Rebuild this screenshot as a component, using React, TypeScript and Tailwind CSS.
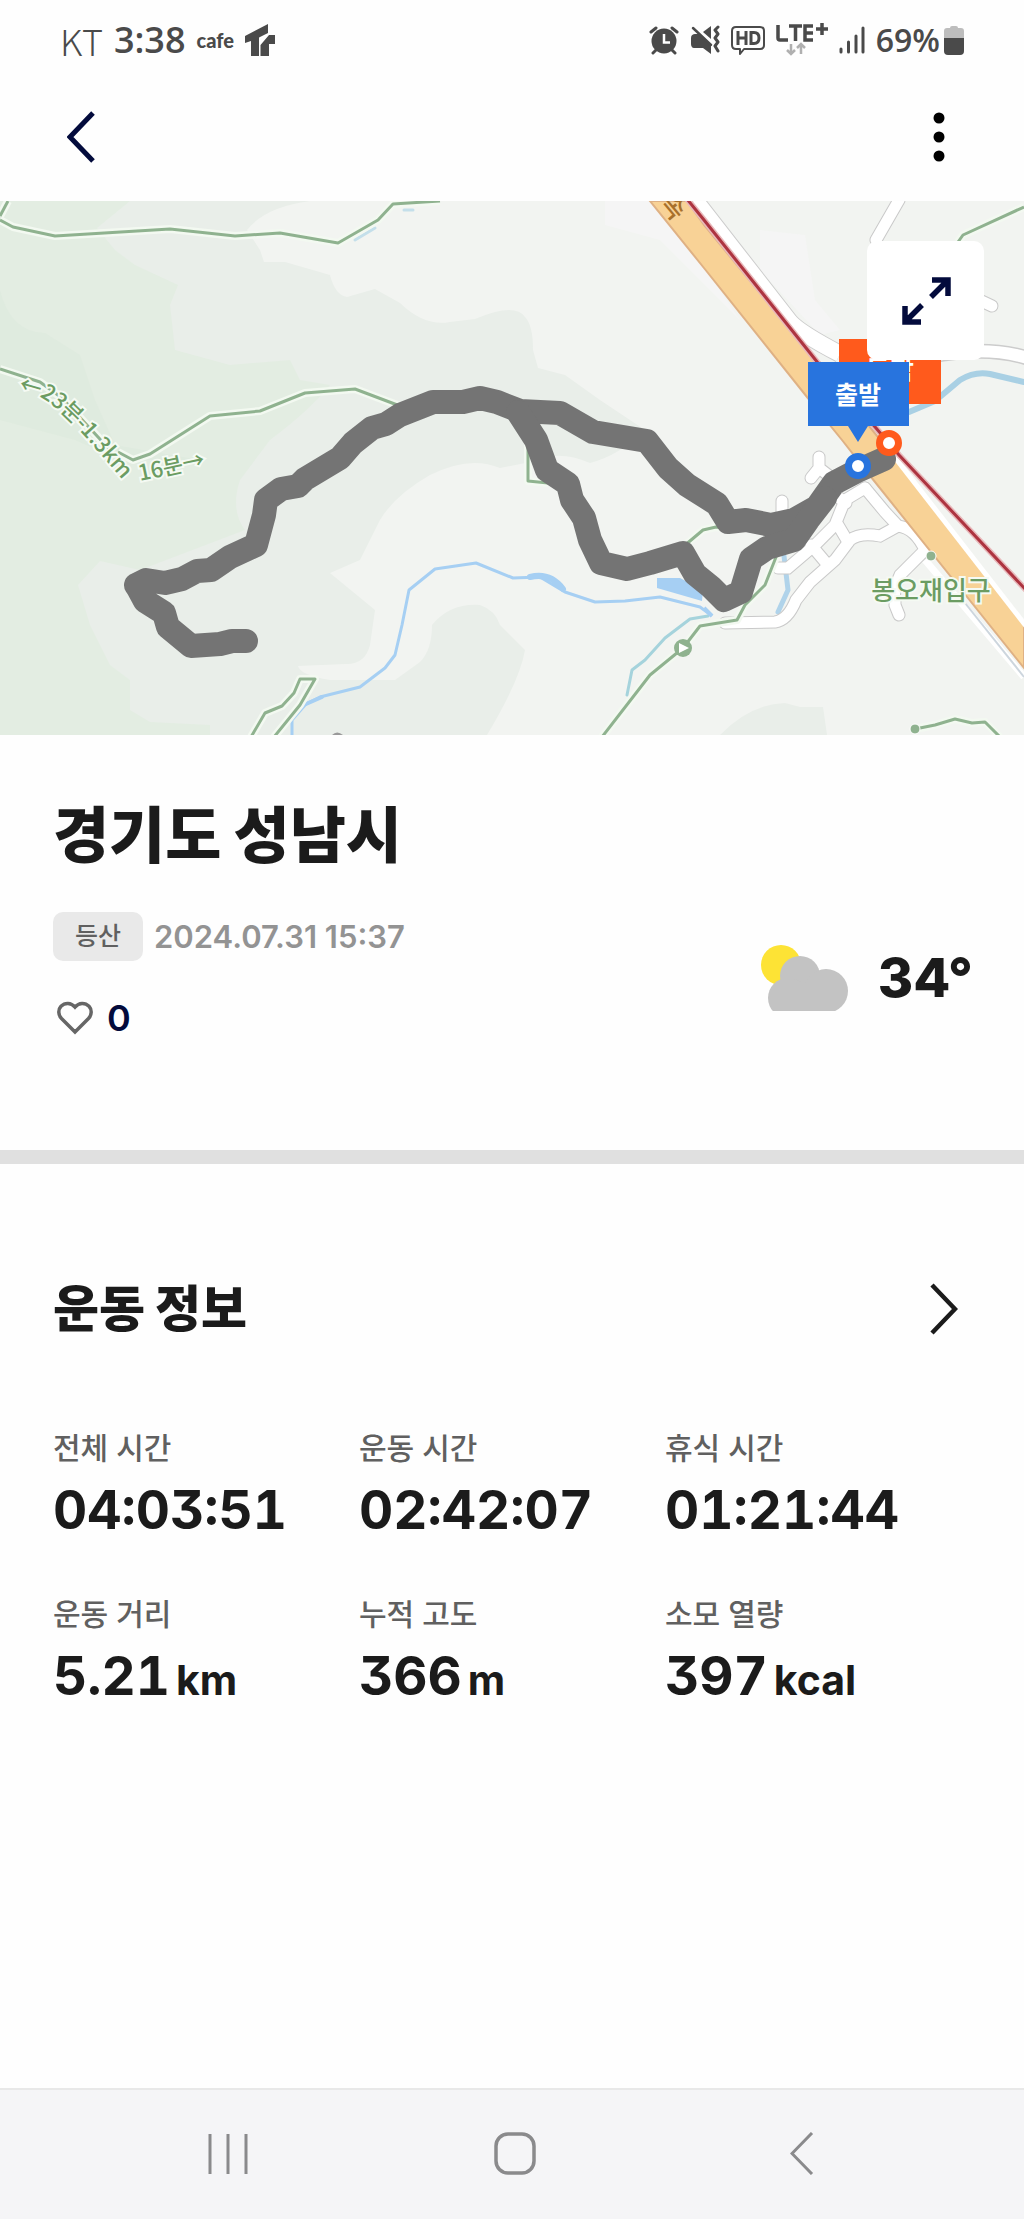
import React from "react";

const KR = "font-['Inter','Noto_Sans_CJK_KR',sans-serif]";

const ink = "#4a4a4a";

function StatusBar() {
  return (
    <div className="flex h-[72px] items-center justify-between pl-[60px] pr-[60px] pt-[8px] text-[#4a4a4a]">
      <div className="flex items-center gap-[11px]">
        <span className="font-['Noto_Sans_CJK_KR',sans-serif] text-[36px] font-light leading-[40px]">KT</span>
        <span className="font-['Open_Sans',sans-serif] text-[36px] font-semibold leading-[40px]">3:38</span>
        <span className="font-['Lato',sans-serif] text-[20px] font-black leading-[40px]">cafe</span>
        <svg width="30" height="33" viewBox="0 0 30 33" fill={ink} aria-hidden="true">
          <path d="M0 12 23 0v9l-9 4.500v18.500H6V17L0 19Z" />
          <path d="M15.500 21 24 11h6v9h-6v12h-8.500Z" />
        </svg>
      </div>
      <div className="flex items-center gap-[11px]">
        <svg width="30" height="30" viewBox="0 0 30 30" aria-label="알람" role="img">
          <circle cx="15" cy="16" r="12.500" fill={ink} />
          <path d="M2 7l5-4M28 7l-5-4M7 25l-3 3M23 25l3 3" stroke={ink} strokeWidth="3" strokeLinecap="round" />
          <path d="M15 9v8.500h6" stroke="white" strokeWidth="2.500" fill="none" />
        </svg>
        <svg width="30" height="30" viewBox="0 0 30 30" aria-label="진동" role="img">
          <path d="M1 13c0-3 2-4 4-4h4l12 11v9l-8-6H4c-2 0-3-2-3-4Z" fill={ink} />
          <path d="M21 1v13l-8-7Z" fill={ink} />
          <path d="M3 3l18 17" stroke={ink} strokeWidth="2.500" strokeLinecap="round" />
          <path d="M28 2l-3 3 3 4-3 4 3 4-3 4 3 5" stroke={ink} strokeWidth="3" fill="none" strokeLinecap="round" strokeLinejoin="round" />
        </svg>
        <svg width="34" height="30" viewBox="0 0 34 30" aria-label="HD" role="img">
          <path d="M5 2h24q4 0 4 4v14q0 4-4 4H13l-4 5v-5H5q-4 0-4-4V6q0-4 4-4Z" stroke={ink} strokeWidth="2" fill="none" strokeLinejoin="round" />
          <path d="M7 6v14M15 6v14M7 13h8M20 7.500v11h3q5 0 5-5.500t-5-5.500Z" stroke={ink} strokeWidth="3" fill="none" />
        </svg>
        <svg width="52" height="34" viewBox="0 0 52 34" aria-label="LTE+" role="img">
          <path d="M2 2v13q0 2 2 2h8M13 3h13M19.500 3v15M37 3h-8v14h8M29 10h8M46 0v12M40 6h12" stroke={ink} strokeWidth="3.500" fill="none" />
          <path d="M15 21v10M11 27l4 4 4-4M25 31V21M21 25l4-4 4 4" stroke="#b0b0b0" strokeWidth="2.500" fill="none" />
        </svg>
        <svg width="26" height="30" viewBox="0 0 26 30" aria-label="신호" role="img">
          <path d="M2 24v3M9.500 17v10M17 11v16M24 3v24" stroke={ink} strokeWidth="3" strokeLinecap="round" />
        </svg>
        <div className="flex items-center gap-1">
          <span className="font-['Open_Sans',sans-serif] text-[32px] font-semibold leading-[40px]">69%</span>
          <svg width="20" height="30" viewBox="0 0 20 30" aria-hidden="true">
            <path d="M3 3h3q0-2 2-2h4q2 0 2 2h3q3 0 3 3v8H0V6q0-3 3-3Z" fill="#bdbdbd" />
            <path d="M0 13h20v13q0 4-4 4H4q-4 0-4-4Z" fill={ink} />
          </svg>
        </div>
      </div>
    </div>
  );
}

function Header() {
  return (
    <header className="flex h-[129px] items-center justify-between pl-[56px] pr-[55px]">
      <button aria-label="뒤로" className="flex h-[72px] w-[50px] items-center justify-center">
        <svg width="28" height="52" viewBox="0 0 28 52" aria-hidden="true">
          <path d="M26 2 3 26l23 24" stroke="#030b3c" strokeWidth="5" fill="none" />
        </svg>
      </button>
      <button aria-label="더보기" className="flex h-[72px] w-[60px] items-center justify-center">
        <svg width="12" height="50" viewBox="0 0 12 50" aria-hidden="true">
          <circle cx="6" cy="6" r="5.500" />
          <circle cx="6" cy="25" r="5.500" />
          <circle cx="6" cy="44" r="5.500" />
        </svg>
      </button>
    </header>
  );
}

const trails = [
  "M0 216 8 201",
  "M0 220 13 227 55 236 170 229 235 236 280 233 338 243 378 220 393 204 440 201",
  "M0 369 40 382 62 398 110 450",
  "M118 452 133 460 150 454 210 416 260 411 305 393 355 389 400 406",
  "M528 440V481L548 483",
  "M684 546 703 530 716 527 740 529",
  "M778 552 765 585 745 605 737 620 700 626 683 648 650 675 602 737",
  "M958 242 963 235 1024 207",
  "M915 729 935 725 955 719 972 723 985 722 1000 737",
  "M251 737 265 713 282 706 294 693 300 679H315L300 705 274 737",
];

const roads = [
  "M725 623 775 622Q788 620 796 600L810 582 835 560 850 540Q860 532 880 536L898 526",
  "M865 488 885 512 898 526Q915 528 925 550L900 575Q893 590 895 600V605L899 615",
  "M865 488 845 500 835 525 815 545 788 568H778",
  "M838 525 848 542",
  "M811 545 827 564",
  "M838 497 846 503",
  "M819 457V468L811 478M819 468 828 475",
  "M782 501V512",
  "M899 200 876 240",
  "M975 298 992 306",
];

const greenLine = "#8fb28f";

function TrailMap() {
  return (
    <svg
      className="block h-[534px] w-full"
      viewBox="0 201 1024 534"
      preserveAspectRatio="xMidYMid slice"
      role="img"
      aria-label="운동 경로 지도"
    >
      <rect x="0" y="201" width="1024" height="534" fill="#f2f4f1" />
      <path
        d="M0 201H310Q265 207 247 230L260 250 264 262 285 262 330 275Q335 295 347 297L375 289 400 303Q425 327 450 322L475 319Q515 302 525 317Q533 325 533 350L538 368 565 375 600 400 645 430Q620 455 590 463 560 450 540 460L500 468Q470 455 430 475 395 495 380 520L360 560 330 573 375 610 370 645Q365 665 345 664L298 666Q300 675 330 680H395L420 662Q432 650 432 625 450 603 480 605 495 610 500 625L525 650Q520 680 487 735H0Z"
        fill="#e9eee9"
      />
      <path
        d="M0 201H130L97 228 115 250 135 265 178 285 170 305 175 350 230 365 290 360 300 380 330 385Q310 410 270 440L240 480Q230 510 245 530L140 570 100 561 78 585 90 625 110 665 130 680V710L150 722 210 725V735H0Z"
        fill="#e3ede2"
      />
      <path d="M0 290Q10 332 45 333L80 355 95 400 115 445 200 460 120 460 75 440 0 420Z" fill="#dfebdf" />
      <path d="M720 735Q750 704 785 703L800 707H823L827 735Z" fill="#e9eee9" />
      <path d="M605 201H650L700 260 740 320 660 240 605 225Z" fill="#f5f5f5" />
      <path d="M760 230 805 235 815 300 840 330 820 335 760 270Z" fill="#f5f5f5" />

      <g fill="none" stroke="#a6cff3" strokeLinejoin="round" strokeLinecap="round">
        <path
          d="M292 737V720L306 704 320 697 360 687 385 668 395 655 402 625 409 590 435 569 476 563 513 578 540 577 565 592 595 602 625 601 660 597 700 607 711 615"
          strokeWidth="3"
        />
        <path d="M530 577Q550 572 563 589" strokeWidth="6" />
        <path d="M306 704 322 697" strokeWidth="4" />
        <path d="M708 616 690 619 665 638 645 660 632 670 627 695" strokeWidth="3" stroke="#a5d3dc" />
        <path d="M909 412 935 401 960 380Q975 371 990 374L1024 382" strokeWidth="6" stroke="#a9d0e4" />
        <path d="M784 556 788 590 778 612" strokeWidth="5" stroke="#b0d3ea" />
        <path d="M355 240 375 228M404 210H413" strokeWidth="3" stroke="#c4dfea" />
      </g>
      <path d="M657 578H680L703 590 702 601 657 588Z" fill="#a6cff3" />
      <path d="M704 608 712 616" stroke="#a6cff3" strokeWidth="4" />

      <g fill="none" stroke="#c9c9c9" strokeWidth="13" strokeLinecap="round">
        {roads.map((d) => <path key={d} d={d} />)}
      </g>
      <g fill="none" stroke="#ffffff" strokeWidth="11" strokeLinecap="round">
        {roads.map((d) => <path key={d} d={d} />)}
      </g>
      <path d="M695 200 790 322Q800 333 840 354" fill="none" stroke="#cccccc" strokeWidth="18" />
      <path d="M695 200 790 322Q800 333 840 354" fill="none" stroke="#ffffff" strokeWidth="16" />
      <path d="M930 356Q990 345 1030 359" fill="none" stroke="#cccccc" strokeWidth="15" />
      <path d="M930 356Q990 345 1030 359" fill="none" stroke="#ffffff" strokeWidth="12" />
      <path d="M925 560 1024 677" stroke="#ffffff" strokeWidth="7" />
      <path d="M965 603 1024 677" stroke="#cdd6de" strokeWidth="2" />

      <path d="M650 201H687L704 225 817 362 899 463 1024 622V668L871 477 842 440 807 397 704 268Z" fill="#f8d296" stroke="#dfb184" strokeWidth="2" />
      <path d="M893 455 1026 626" stroke="#ffffff" strokeWidth="5" />
      <path d="M687 199 704 220 818 363 876 428 899 455 1026 590" fill="none" stroke="#e8b9bb" strokeWidth="6" />
      <path d="M687 199 704 220 818 363 876 428 899 455 1026 590" fill="none" stroke="#ad3440" strokeWidth="3" />
      <text transform="translate(673 207) rotate(50)" textAnchor="middle" y="9" className="fill-[#a8702b] font-['Noto_Sans_CJK_KR',sans-serif] text-[26px] font-medium">속</text>

      <g fill="none" strokeLinejoin="round">
        {trails.map((d) => <path key={d} d={d} stroke="#f3f9f1" strokeWidth="8" />)}
        {trails.map((d) => <path key={d} d={d} stroke={greenLine} strokeWidth="3" />)}
      </g>
      <circle cx="683" cy="648" r="9" fill={greenLine} />
      <path d="M679 643 689 648 679 653Z" fill="white" />
      <circle cx="931" cy="556" r="5" fill={greenLine} stroke="white" />
      <circle cx="915" cy="729" r="5" fill={greenLine} stroke="white" />
      <path d="M332 735Q337 730 343 735Z" fill="#999" />

      <g className="fill-[#6b9c62] font-['Noto_Sans_CJK_KR',sans-serif] text-[22px] font-medium" stroke="#f5faf3" strokeWidth="4" paintOrder="stroke">
        <path id="trail-label" d="M18 391 42 398Q60 408 90 442L140 500" fill="none" stroke="none" />
        <text><textPath href="#trail-label">←23분-1.3km</textPath></text>
        <text transform="translate(140 481) rotate(-12)">16분→</text>
        <text x="931" y="600" textAnchor="middle" className="text-[26px]">봉오재입구</text>
      </g>

      <g fill="none" stroke="#747474" strokeWidth="24" strokeLinecap="round" strokeLinejoin="round">
        <path d="M246 641 232 641 220 644 191 646 168 627 164 613 145 601 138 588 136 585 146 580 165 583 182 579 197 571 211 570 230 557 256 545 264 515 266 500 281 489 298 486 305 479 320 470 340 458 353 443 372 428 386 424 400 415 433 402 463 402 480 398 497 402 520 411 560 413 593 432 647 441 668 468 687 485 717 504 728 522 746 520 771 525 794 520 817 507 834 483 857 471 884 459" />
        <path d="M518 412 536 440 547 470 568 484 572 500 584 518 590 540 601 563 627 569 650 563 683 553 695 574 711 587 724 600 741 592 751 559 767 548 794 540 808 520 825 498" />
      </g>

      <rect x="839" y="339" width="102" height="65" fill="#ff5a1c" />
      <text x="890" y="379" textAnchor="middle" className="fill-white font-['Noto_Sans_CJK_KR',sans-serif] text-[26px] font-bold">도착</text>
      <path d="M808 362H909V426H868L858 442 848 426H808Z" fill="#2874de" />
      <text x="858" y="404" textAnchor="middle" className="fill-white font-['Noto_Sans_CJK_KR',sans-serif] text-[25px] font-bold">출발</text>
      <circle cx="889" cy="443" r="9.500" fill="white" stroke="#ff5a1c" strokeWidth="7" />
      <circle cx="858" cy="466" r="9.500" fill="white" stroke="#2874de" strokeWidth="7" />
    </svg>
  );
}

function Summary() {
  return (
    <section className="flex items-end justify-between border-b-[14px] border-[#e0e0e0] pb-[112px] pl-[53px] pr-[51px] pt-[61px]">
      <div>
        <h1 className="text-[61px] font-black leading-[80px] text-[#1b1b1b]">경기도 성남시</h1>
        <div className="mt-[36px] flex items-center gap-[11px]">
          <span className="flex h-[49px] items-center rounded-[10px] bg-[#e9e9e9] px-[22px] text-[25px] font-medium text-[#606060]">등산</span>
          <time className="text-[31px] font-semibold leading-[49px] text-[#939393]">2024.07.31 15:37</time>
        </div>
        <button className="mt-[37px] flex h-[40px] items-center gap-[14px] pl-[4px]" aria-label="좋아요 0">
          <svg width="36" height="34" viewBox="0 0 36 34" aria-hidden="true">
            <path d="M18 31 4.500 17.500C1 14 1 8.500 4 5.300 8 1.300 14 1.500 18 6 22 1.500 28 1.300 32 5.300 35 8.500 35 14 31.500 17.500Z" stroke="#666" strokeWidth="3.500" fill="none" />
          </svg>
          <span className="text-[36px] font-semibold text-[#030b3c]">0</span>
        </button>
      </div>
      <div className="mb-[27px] flex items-center gap-[30px]">
        <svg width="87" height="66" viewBox="0 0 87 66" role="img" aria-label="구름 조금">
          <circle cx="20" cy="20" r="20" fill="#fde335" />
          <g fill="#c3c3c3">
            <circle cx="39" cy="31" r="20" />
            <circle cx="65" cy="46" r="22" />
            <circle cx="27" cy="53" r="20" />
            <path d="M27 40H65V66H27Z" />
          </g>
        </svg>
        <span className="text-[54px] font-extrabold leading-[66px] text-[#1b1b1b]">34°</span>
      </div>
    </section>
  );
}

const stats = [
  { label: "전체 시간", value: "04:03:51" },
  { label: "운동 시간", value: "02:42:07" },
  { label: "휴식 시간", value: "01:21:44" },
  { label: "운동 거리", value: "5.21", unit: "km" },
  { label: "누적 고도", value: "366", unit: "m" },
  { label: "소모 열량", value: "397", unit: "kcal" },
];

function Workout() {
  return (
    <section className="px-[53px] pb-12 pt-[115px]">
      <div className="flex items-center justify-between">
        <h2 className="text-[50px] font-black leading-[60px] text-[#1b1b1b]">운동 정보</h2>
        <button aria-label="운동 정보 더보기" className="flex h-[60px] w-[54px] items-center justify-center">
          <svg width="28" height="52" viewBox="0 0 28 52" aria-hidden="true">
            <path d="M2 2 25 26 2 50" stroke="#1b1b1b" strokeWidth="4.500" fill="none" />
          </svg>
        </button>
      </div>
      <dl className="mt-[89px] grid grid-cols-3 gap-y-[54px]">
        {stats.map((s) => (
          <div key={s.label}>
            <dt className="text-[30px] font-medium leading-[40px] text-[#606060]">{s.label}</dt>
            <dd className="mt-[12px] whitespace-nowrap text-[53px] font-bold leading-[60px] text-[#1b1b1b] [font-feature-settings:'cv09','tnum']">
              {s.value}
              {s.unit && <span className="ml-[6px] text-[41px] font-bold">{s.unit}</span>}
            </dd>
          </div>
        ))}
      </dl>
    </section>
  );
}

function NavBar() {
  const button = "flex items-center justify-center";
  return (
    <nav className="mt-auto grid h-[131px] grid-cols-3 border-t-2 border-[#e8e8e8] bg-[#f5f5f7] pb-[2px] pl-[84px] pr-[78px]">
      <button aria-label="최근 앱" className={button}>
        <svg width="40" height="42" viewBox="0 0 40 42" aria-hidden="true">
          <path d="M2 1v40M20 1v40M38 1v40" stroke="#8a8a8c" strokeWidth="3" />
        </svg>
      </button>
      <button aria-label="홈" className={button}>
        <svg width="42" height="43" viewBox="0 0 42 43" aria-hidden="true">
          <rect x="2" y="2" width="38" height="39" rx="12" stroke="#8a8a8c" strokeWidth="3.500" fill="none" />
        </svg>
      </button>
      <button aria-label="이전" className={button}>
        <svg width="24" height="43" viewBox="0 0 24 43" aria-hidden="true">
          <path d="M22 1 2 21.500 22 42" stroke="#8a8a8c" strokeWidth="3" fill="none" />
        </svg>
      </button>
    </nav>
  );
}

export default function App() {
  return (
    <div className={`flex min-h-screen flex-col bg-[#fefefe] ${KR}`}>
      <StatusBar />
      <Header />
      <main>
        <div className="relative">
          <TrailMap />
          <button aria-label="지도 확대" className="absolute right-[40px] top-[40px] flex h-[119px] w-[117px] items-center justify-center rounded-[10px] bg-white">
            <svg width="50" height="50" viewBox="0 0 50 50" aria-hidden="true">
              <path d="M31 4H47V20M46 5 30 21M4 30V46H20M5 45 21 29" stroke="#030b3c" strokeWidth="5.500" fill="none" />
            </svg>
          </button>
        </div>
        <Summary />
        <Workout />
      </main>
      <NavBar />
    </div>
  );
}
